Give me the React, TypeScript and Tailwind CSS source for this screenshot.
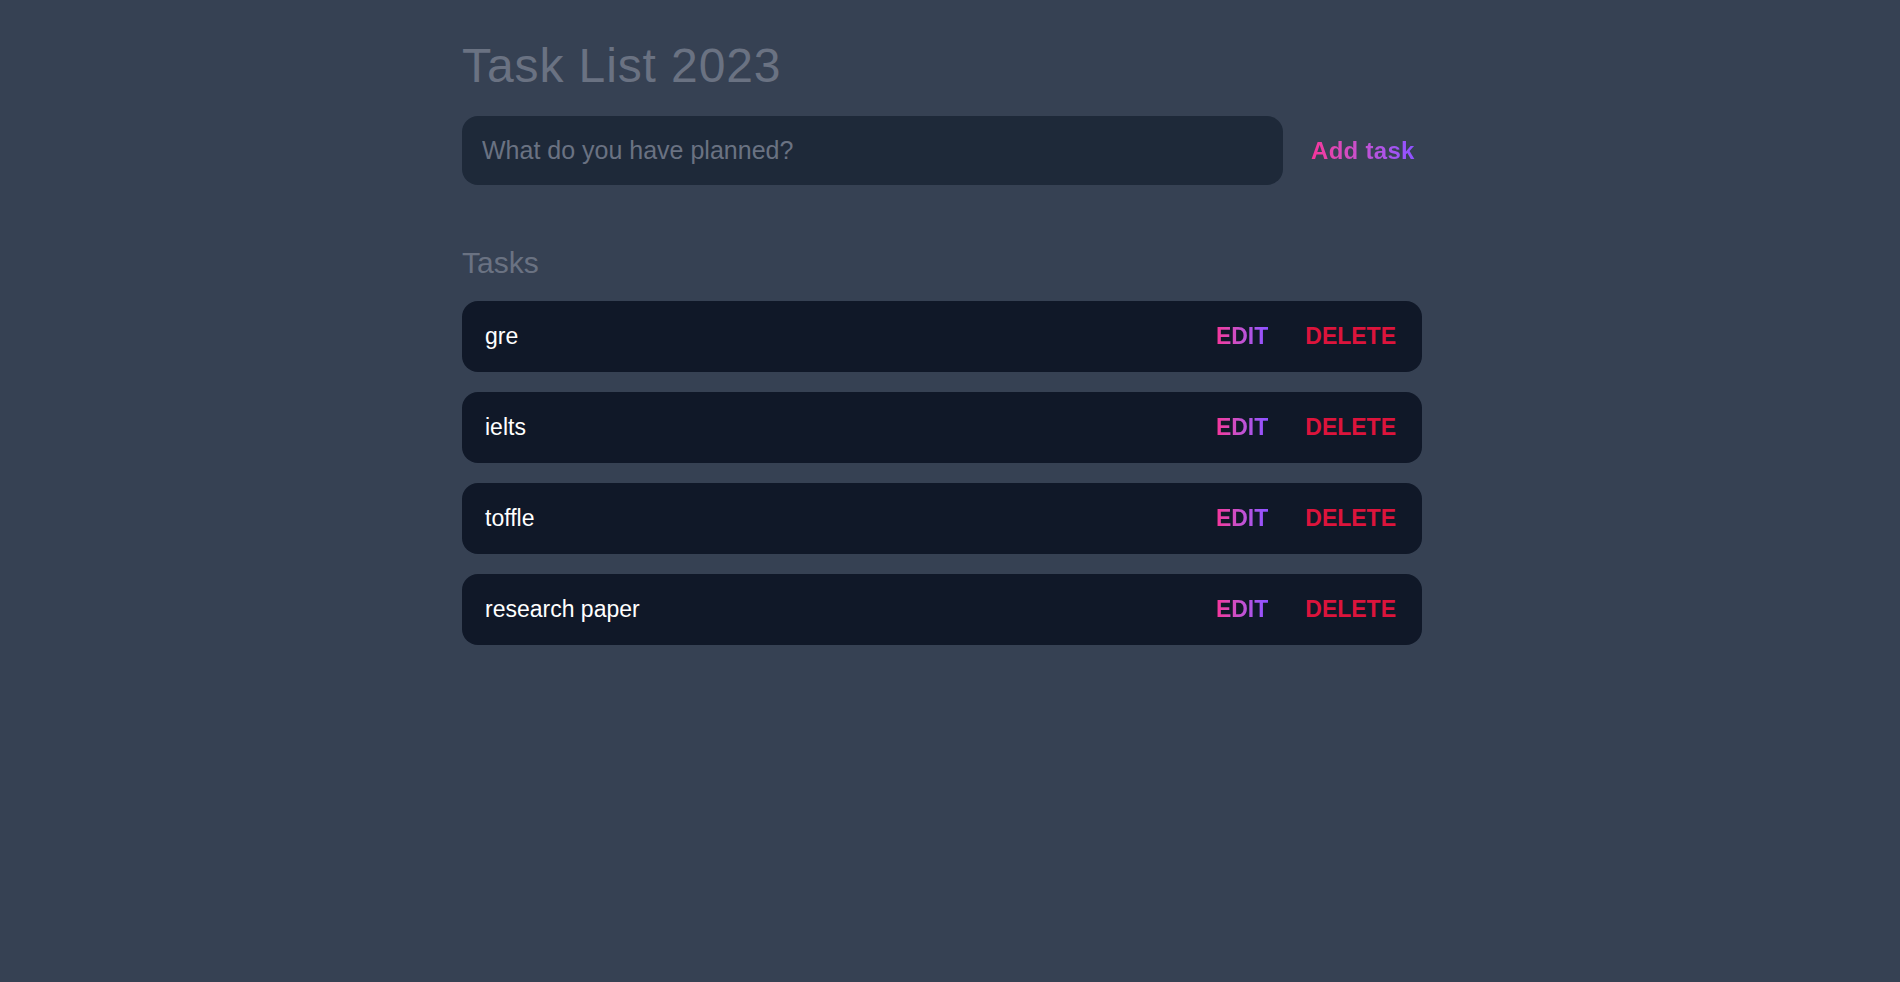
import React, { useState } from 'react';

type Task = { id: number; text: string };

export default function App() {
  const [tasks, setTasks] = useState<Task[]>([
    { id: 1, text: 'gre' },
    { id: 2, text: 'ielts' },
    { id: 3, text: 'toffle' },
    { id: 4, text: 'research paper' },
  ]);
  const [draft, setDraft] = useState('');

  const addTask = (e: React.FormEvent) => {
    e.preventDefault();
    if (!draft.trim()) return;
    setTasks([...tasks, { id: Date.now(), text: draft.trim() }]);
    setDraft('');
  };

  return (
    <div
      className="min-h-screen w-full bg-gray-700 flex justify-center pr-[16px]"
      style={{ fontFamily: '"Liberation Sans", Arial, sans-serif' }}
    >
      <div className="w-[960px] pt-[42px]">
        <h1 className="text-[48px] leading-[48px] tracking-[0.9px] text-gray-500">Task List 2023</h1>

        <form onSubmit={addTask} className="mt-[26px] flex items-center">
          <input
            value={draft}
            onChange={(e) => setDraft(e.target.value)}
            placeholder="What do you have planned?"
            className="w-[821px] h-[69px] rounded-2xl bg-gray-800 pl-[20px] pr-4 text-[25px] text-white placeholder:text-gray-500 outline-none"
          />
          <button
            type="submit"
            className="ml-[28px] text-[24px] font-semibold tracking-[0.3px] bg-linear-to-r from-pink-500 to-violet-500 bg-clip-text text-transparent"
          >
            Add task
          </button>
        </form>

        <section className="mt-[60px]">
          <h2 className="text-[30px] leading-[36px] font-medium text-gray-500">Tasks</h2>
          <div className="mt-[20px] flex flex-col gap-[20px]">
            {tasks.map((t) => (
              <div
                key={t.id}
                className="h-[71px] rounded-2xl bg-gray-900 flex items-center justify-between pl-[23px] pr-[26px]"
              >
                <span className="text-[23px] text-white">{t.text}</span>
                <div className="flex items-center gap-[37px]">
                  <button className="text-[23px] font-semibold uppercase bg-linear-to-r from-pink-500 to-violet-500 bg-clip-text text-transparent">
                    Edit
                  </button>
                  <button
                    onClick={() => setTasks(tasks.filter((x) => x.id !== t.id))}
                    className="text-[23px] font-semibold uppercase text-[#dc143c]"
                  >
                    Delete
                  </button>
                </div>
              </div>
            ))}
          </div>
        </section>
      </div>
    </div>
  );
}
